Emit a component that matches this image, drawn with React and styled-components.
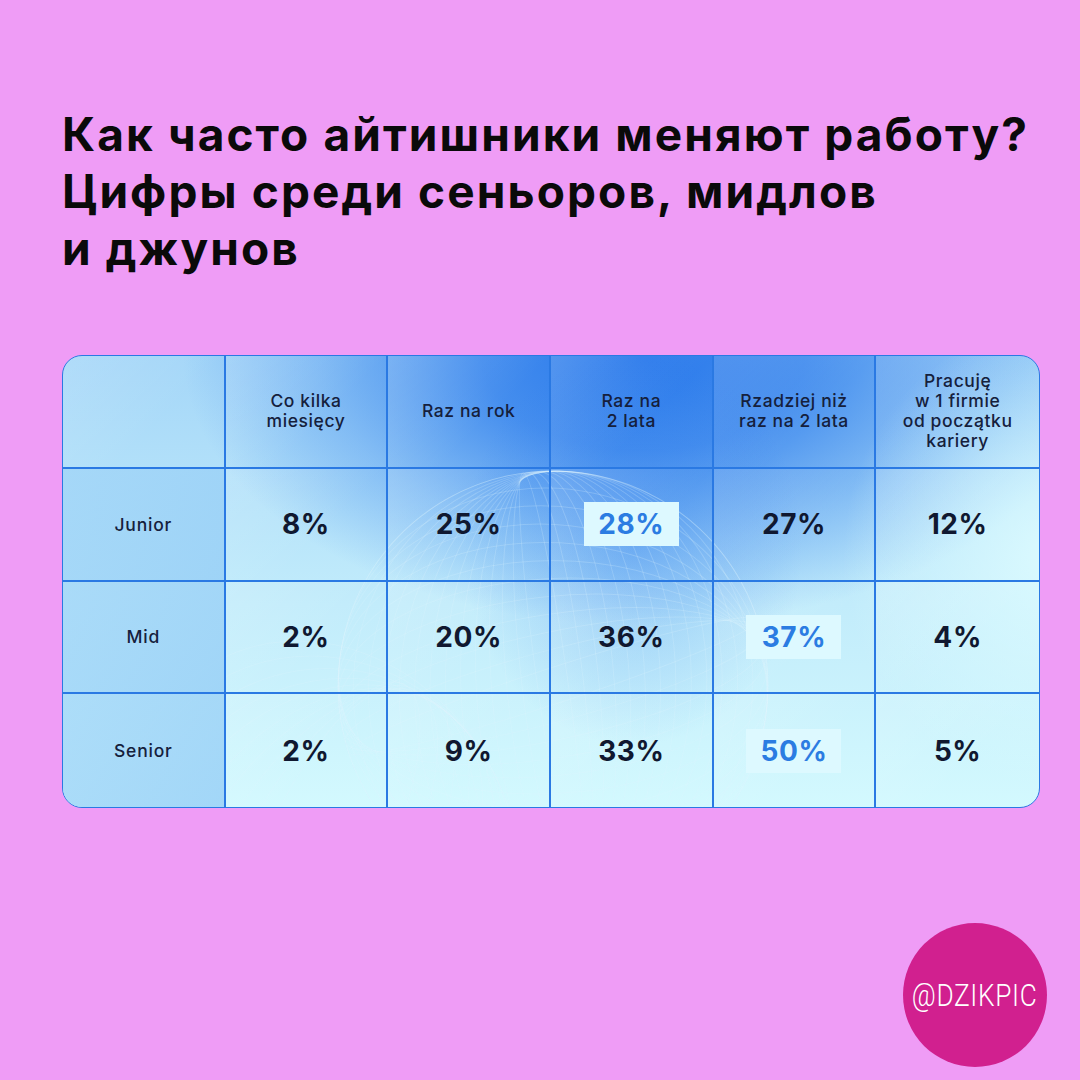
import React from "react";
import styled, { createGlobalStyle } from "styled-components";

const GlobalStyle = createGlobalStyle`
  html, body { margin: 0; padding: 0; background: #ef9cf6; }
  * { box-sizing: border-box; }
`;

const Page = styled.div`
  width: 1080px;
  height: 1080px;
  background: #ef9cf6;
  padding: 106px 33px 0 62px;
  display: flex;
  flex-direction: column;
  font-family: Inter, "Noto Sans", sans-serif;
  overflow: hidden;
`;

const Title = styled.h1`
  margin: 0;
  font-family: Inter, "Noto Sans", sans-serif;
  font-weight: 700;
  font-size: 46px;
  line-height: 57px;
  letter-spacing: 2.1px;
  color: #0a0a0a;
  white-space: nowrap;
`;

const Table = styled.div`
  position: relative;
  margin-top: 78px;
  width: 978px;
  height: 453px;
  border: 1px solid #2a79e3;
  border-radius: 20px;
  overflow: hidden;
  display: grid;
  grid-template-columns: repeat(6, 1fr);
  grid-template-rows: repeat(4, 1fr);
  background:
    radial-gradient(ellipse 210px 230px at 990px 200px, rgba(222, 252, 255, 0.9) 0%, rgba(222, 252, 255, 0) 100%),
    radial-gradient(ellipse 170px 200px at 570px 190px, rgba(40, 120, 235, 0.32) 0%, rgba(40, 120, 235, 0) 100%),
    radial-gradient(ellipse 460px 270px at 580px 0px, rgba(40, 120, 235, 1) 0%, rgba(40, 120, 235, 0.78) 35%, rgba(40, 120, 235, 0.32) 70%, rgba(40, 120, 235, 0) 100%),
    linear-gradient(180deg, #a4d6f8 0%, #c2ecfb 55%, #d3f9fe 100%);
`;

const Globe = styled.svg`
  position: absolute;
  left: 0;
  top: 0;
  width: 100%;
  height: 100%;
  pointer-events: none;
`;

const Cell = styled.div`
  position: relative;
  display: flex;
  align-items: center;
  justify-content: center;
  text-align: center;
  border-right: ${(p) => (p.$lastCol ? "none" : "2px solid #2a79e3")};
  border-bottom: ${(p) => (p.$lastRow ? "none" : "2px solid #2a79e3")};
  background: ${(p) =>
    p.$label && !p.$head
      ? "linear-gradient(135deg, rgba(160, 212, 247, 0.7), rgba(150, 206, 246, 0.8))"
      : "linear-gradient(135deg, rgba(255, 255, 255, 0.14), rgba(255, 255, 255, 0) 60%)"};
`;

const HeadText = styled.div`
  font-family: Inter, "Noto Sans", sans-serif;
  font-weight: 500;
  font-size: 17.5px;
  line-height: 20px;
  color: #15203c;
  letter-spacing: 0.6px;
`;

const RowLabel = styled.div`
  font-family: Inter, "Noto Sans", sans-serif;
  font-weight: 500;
  font-size: 17.5px;
  color: #15203c;
  letter-spacing: 0.8px;
`;

const Value = styled.div`
  display: flex;
  align-items: center;
  justify-content: center;
  width: 95px;
  height: 44px;
  font-family: Inter, "Noto Sans", sans-serif;
  font-weight: 700;
  font-size: 28px;
  letter-spacing: 0.6px;
  color: ${(p) => (p.$hl ? "#2b7ce2" : "#101830")};
  background: ${(p) => (p.$hl ? "#ddf9ff" : "transparent")};
`;

const Footer = styled.div`
  margin-top: 115px;
  display: flex;
  justify-content: flex-end;
`;

const Badge = styled.div`
  width: 144px;
  height: 144px;
  border-radius: 50%;
  background: #d1208f;
  display: flex;
  align-items: center;
  justify-content: center;
`;

const BadgeText = styled.span`
  font-family: Roboto, "Liberation Sans", sans-serif;
  font-weight: 300;
  font-size: 32px;
  color: #ffffff;
  letter-spacing: 0.8px;
  transform: scaleX(0.82);
  white-space: nowrap;
`;

const headers = [
  "",
  "Co kilka\nmiesięcy",
  "Raz na rok",
  "Raz na\n2 lata",
  "Rzadziej niż\nraz na 2 lata",
  "Pracuję\nw 1 firmie\nod początku\nkariery",
];

const rows = [
  { label: "Junior", values: ["8%", "25%", "28%", "27%", "12%"], hl: 2 },
  { label: "Mid", values: ["2%", "20%", "36%", "37%", "4%"], hl: 3 },
  { label: "Senior", values: ["2%", "9%", "33%", "50%", "5%"], hl: 3 },
];

function GlobeArt() {
  const cx = 490;
  const cy = 330;
  const r = 215;
  const lines = [];
  for (let i = 0; i < 14; i++) {
    const rx = (r * (i + 1)) / 14;
    lines.push(
      <ellipse
        key={"m" + i}
        cx={cx}
        cy={cy}
        rx={rx}
        ry={r}
        fill="none"
        transform={`rotate(${-8 + i * 1.2} ${cx} ${cy})`}
      />
    );
  }
  for (let i = 0; i < 12; i++) {
    const ry = (r * (i + 1)) / 12;
    lines.push(
      <ellipse
        key={"p" + i}
        cx={cx}
        cy={cy}
        rx={r}
        ry={ry}
        fill="none"
        transform={`rotate(${-18 + i * 3} ${cx} ${cy})`}
      />
    );
  }
  for (let i = 0; i < 10; i++) {
    lines.push(
      <ellipse
        key={"s" + i}
        cx={cx - 230}
        cy={cy + 170}
        rx={60 + i * 18}
        ry={190}
        fill="none"
        transform={`rotate(${25 + i * 4} ${cx - 230} ${cy + 170})`}
      />
    );
  }
  return (
    <Globe viewBox="0 0 976 451" preserveAspectRatio="none">
      <g stroke="rgba(225, 248, 255, 0.22)" strokeWidth="1">
        {lines}
      </g>
    </Globe>
  );
}

export default function App() {
  return (
    <>
      <GlobalStyle />
      <Page>
        <Title>
          Как часто айтишники меняют работу?
          <br />
          Цифры среди сеньоров, мидлов
          <br />
          и джунов
        </Title>
        <Table>
          <GlobeArt />
          {headers.map((h, i) => (
            <Cell key={"h" + i} $head $label={i === 0} $lastCol={i === 5}>
              <HeadText>
                {h.split("\n").map((l, j) => (
                  <div key={j}>{l}</div>
                ))}
              </HeadText>
            </Cell>
          ))}
          {rows.map((row, ri) => (
            <React.Fragment key={row.label}>
              <Cell $label $lastRow={ri === rows.length - 1}>
                <RowLabel>{row.label}</RowLabel>
              </Cell>
              {row.values.map((v, vi) => (
                <Cell
                  key={vi}
                  $lastCol={vi === 4}
                  $lastRow={ri === rows.length - 1}
                >
                  <Value $hl={vi === row.hl}>{v}</Value>
                </Cell>
              ))}
            </React.Fragment>
          ))}
        </Table>
        <Footer>
          <Badge>
            <BadgeText>@DZIKPIC</BadgeText>
          </Badge>
        </Footer>
      </Page>
    </>
  );
}
